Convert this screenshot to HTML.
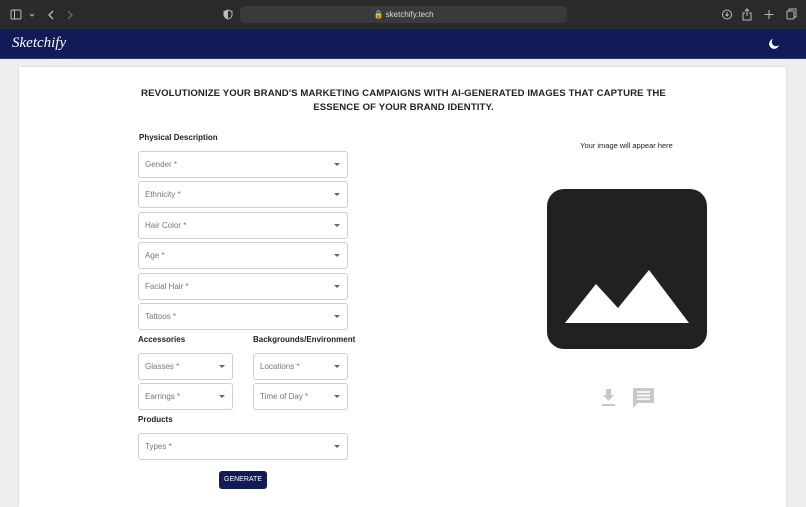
<!DOCTYPE html>
<html><head><style>
*{box-sizing:border-box;margin:0;padding:0}
body{width:806px;height:504px;overflow:hidden;background:#eeeeee;font-family:"Liberation Sans",sans-serif;position:relative}
.top{position:absolute;left:0;top:0;width:806px;height:29px;background:#2a2a2b}
.url{position:absolute;left:240px;top:6px;width:327px;height:17px;background:#3a3a3c;border-radius:5px;color:#ddd;font-size:8px;text-align:center;line-height:17px}
.nav{position:absolute;left:0;top:29px;width:806px;height:30px;background:#111b58;border-bottom:1px solid #2b3470}
.logo{position:absolute;left:12px;top:6px;color:#fff;font-family:"Liberation Serif",serif;font-style:italic;font-size:15px}
.card{position:absolute;left:19px;top:67px;width:767px;height:440px;background:#fff;box-shadow:0 0 2px rgba(0,0,0,.15)}
h1{position:absolute;left:140px;top:87px;width:527px;text-align:center;font-size:9.6px;font-weight:bold;line-height:14px;color:#222;letter-spacing:.1px}
.lbl{position:absolute;font-size:8px;font-weight:bold;color:#222}
.sel{position:absolute;height:27px;border:1px solid #cfcfcf;border-radius:3px;font-size:8px;color:#777;padding-left:6px;line-height:25px}
.sel:after{content:"";position:absolute;right:7px;top:11px;border-left:3px solid transparent;border-right:3px solid transparent;border-top:3px solid #666}
.btn{position:absolute;left:219px;top:471px;width:48px;height:18px;background:#111b58;color:#fff;font-size:7px;text-align:center;line-height:18px;border-radius:3px}
</style></head><body>
<div class="top">
<svg style="position:absolute;left:10px;top:9px" width="80" height="12"><rect x="1" y="1" width="10" height="9" rx="1.5" fill="none" stroke="#bbb"/><line x1="4.5" y1="1" x2="4.5" y2="10" stroke="#bbb"/><path d="M20 5l2 2 2-2" stroke="#bbb" fill="none"/><path d="M43 2l-4 4 4 4" stroke="#bbb" fill="none" stroke-width="1.3"/><path d="M58 2l4 4-4 4" stroke="#666" fill="none" stroke-width="1.3"/></svg>
<svg style="position:absolute;left:223px;top:9px" width="10" height="11"><path d="M5 1L9 2.5V6C9 8 7 9.5 5 10 3 9.5 1 8 1 6V2.5Z" fill="none" stroke="#bbb"/><path d="M5 1V10C3 9.5 1 8 1 6V2.5Z" fill="#bbb"/></svg>
<div class="url">🔒 sketchify.tech</div>
<svg style="position:absolute;left:720px;top:8px" width="80" height="13"><circle cx="7" cy="6.5" r="4.5" fill="none" stroke="#bbb"/><path d="M7 4v4M5.5 6.5L7 8l1.5-1.5" stroke="#bbb" fill="none"/><path d="M25 5h-2v7h8V5h-2M27 1v7M25 3l2-2 2 2" stroke="#bbb" fill="none"/><path d="M49 2v9M44.5 6.5h9" stroke="#bbb"/><rect x="67" y="3" width="7" height="8" rx="1" fill="none" stroke="#bbb"/><path d="M69 3V1h7v8h-2" stroke="#bbb" fill="none"/></svg>
</div>
<div class="nav"><div class="logo">Sketchify</div>
<svg style="position:absolute;left:768px;top:9px" width="12" height="12"><path d="M5 1a5 5 0 1 0 6 6A4 4 0 0 1 5 1z" fill="#fff"/></svg></div>
<div class="card"></div>
<h1>REVOLUTIONIZE YOUR BRAND'S MARKETING CAMPAIGNS WITH AI-GENERATED IMAGES THAT CAPTURE THE ESSENCE OF YOUR BRAND IDENTITY.</h1>
<div class="lbl" style="left:139px;top:133px">Physical Description</div>
<div class="sel" style="left:138px;top:151px;width:210px">Gender *</div>
<div class="sel" style="left:138px;top:181px;width:210px">Ethnicity *</div>
<div class="sel" style="left:138px;top:212px;width:210px">Hair Color *</div>
<div class="sel" style="left:138px;top:242px;width:210px">Age *</div>
<div class="sel" style="left:138px;top:273px;width:210px">Facial Hair *</div>
<div class="sel" style="left:138px;top:303px;width:210px">Tattoos *</div>
<div class="lbl" style="left:138px;top:335px">Accessories</div>
<div class="lbl" style="left:253px;top:335px">Backgrounds/Environment</div>
<div class="sel" style="left:138px;top:353px;width:95px">Glasses *</div>
<div class="sel" style="left:253px;top:353px;width:95px">Locations *</div>
<div class="sel" style="left:138px;top:383px;width:95px">Earrings *</div>
<div class="sel" style="left:253px;top:383px;width:95px">Time of Day *</div>
<div class="lbl" style="left:138px;top:415px">Products</div>
<div class="sel" style="left:138px;top:433px;width:210px">Types *</div>
<div class="btn">GENERATE</div>
<div style="position:absolute;left:530px;top:141px;width:193px;text-align:center;font-size:7.5px;color:#222">Your image will appear here</div>
<svg style="position:absolute;left:547px;top:189px" width="161" height="161"><rect width="160" height="160" rx="17" fill="#212121"/><path d="M18 134L49 95 71 119 102 81 142 134Z" fill="#fff"/></svg>
<svg style="position:absolute;left:600px;top:385px" width="60" height="25"><path d="M6 4h5v6h3l-5.5 6L3 10h3z" fill="#c8c8c8"/><rect x="2" y="19" width="13" height="2" fill="#c8c8c8"/><path d="M33 3h20a1 1 0 0 1 1 1v13a1 1 0 0 1-1 1H38l-5 5z" fill="#c8c8c8"/><path d="M37 7h13M37 10.5h13M37 14h13" stroke="#fff" stroke-width="1.5"/></svg>
</body></html>
